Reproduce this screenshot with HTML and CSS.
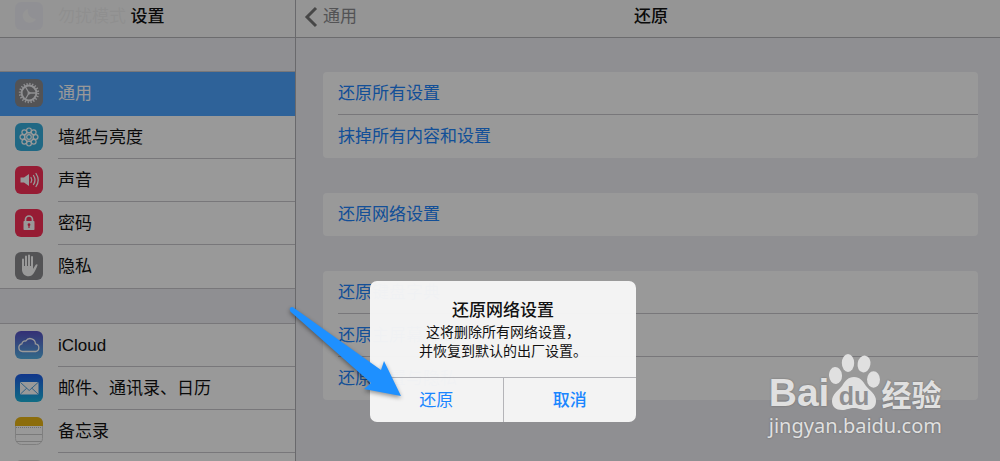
FILE: index.html
```html
<!DOCTYPE html>
<html lang="zh-CN">
<head>
  <meta charset="UTF-8">
  <meta name="viewport" content="width=device-width, initial-scale=1.0">
  <title>设置 - 还原</title>
  <link rel="stylesheet" href="styles.css">
</head>
<body>
  <div class="screen">
    <!-- 左侧菜单 -->
    <aside class="sidebar">
      <header class="bar"><h1 class="bar-title">设置</h1></header>
      <nav class="menu">
        <a class="row row-first" href="#">
          <svg class="icon" viewBox="0 0 28 28"><rect width="28" height="28" rx="6" fill="#5856d6"/><path d="M13 7a7 7 0 1 0 8 10A8 8 0 0 1 13 7z" fill="#fff"/></svg>
          <span class="label">勿扰模式</span>
        </a>
        <div class="group">
          <a class="row active" href="#">
            <svg class="icon" viewBox="0 0 28 28"><rect width="28" height="28" rx="6" fill="#8a8a8e"/><g fill="none" stroke="#efeff2"><circle cx="14" cy="14" r="9.2" stroke-width="2" stroke-dasharray="1.3 1.59"/><circle cx="14" cy="14" r="7.4" stroke-width="2"/><path d="M14 14h7M14 14l-3.5-6M14 14l-3.5 6" stroke-width="1.3"/></g><circle cx="14" cy="14" r="1.5" fill="#efeff2"/></svg>
            <span class="label">通用</span>
          </a>
          <a class="row" href="#">
            <svg class="icon" viewBox="0 0 28 28"><rect width="28" height="28" rx="6" fill="#36aedd"/><g fill="none" stroke="#fff" stroke-width="1.2"><circle cx="14" cy="14" r="2.3"/><circle cx="14" cy="7.4" r="2.4"/><circle cx="18.700" cy="9.300" r="2.400"/><circle cx="20.600" cy="14" r="2.400"/><circle cx="18.700" cy="18.700" r="2.400"/><circle cx="14" cy="20.600" r="2.400"/><circle cx="9.300" cy="18.700" r="2.400"/><circle cx="7.400" cy="14" r="2.400"/><circle cx="9.300" cy="9.300" r="2.400"/><circle cx="14" cy="14" r="4.300"/></g></svg>
            <span class="label">墙纸与亮度</span>
          </a>
          <a class="row" href="#">
            <svg class="icon" viewBox="0 0 28 28"><rect width="28" height="28" rx="6" fill="#fa2f57"/><path d="M5.500 11.500h3.500l5-3.500v12l-5-3.500h-3.500z" fill="#fff"/><g fill="none" stroke="#fff" stroke-width="1.3" stroke-linecap="round"><path d="M16 11.500q1.600 2.500 0 5"/><path d="M18.500 9.500q3 4.500 0 9"/><path d="M21 7.500q4.400 6.500 0 13"/></g></svg>
            <span class="label">声音</span>
          </a>
          <a class="row" href="#">
            <svg class="icon" viewBox="0 0 28 28"><rect width="28" height="28" rx="6" fill="#fa2f57"/><path d="M10.500 13v-2.500a3.500 3.500 0 0 1 7 0v2.500" fill="none" stroke="#fff" stroke-width="1.700"/><rect x="8.500" y="12" width="11" height="9" rx=".7" fill="#fff"/><path d="M12.600 15.700a1.400 1.400 0 1 1 2 1.200v2.100h-1.200v-2.100a1.400 1.400 0 0 1-.8-1.200z" fill="#fa2f57"/></svg>
            <span class="label">密码</span>
          </a>
          <a class="row" href="#">
            <svg class="icon" viewBox="0 0 28 28"><rect width="28" height="28" rx="6" fill="#8a8a8e"/><g stroke="#fff" stroke-width="2" stroke-linecap="round"><path d="M8 7.500v10M11 4.500v12M14 3.500v12M17 5v12"/></g><path d="M7 14h11v3l2.700-4.300q1-1 2 0c-.8 2.300-2.400 6-4 8.600-1.300 2-2.900 2.900-5 2.900-3.700 0-6.700-2.300-6.700-7z" fill="#fff"/></svg>
            <span class="label">隐私</span>
          </a>
        </div>
        <div class="group">
          <a class="row" href="#">
            <svg class="icon" viewBox="0 0 28 28"><defs><linearGradient id="cloud-bg" x2="0" y2="1"><stop stop-color="#5850c4"/><stop offset="1" stop-color="#55b0e4"/></linearGradient></defs><rect width="28" height="28" rx="6" fill="url(#cloud-bg)"/><path d="M7.500 20.500a3.900 3.900 0 0 1-.6-7.700A3.200 3.200 0 0 1 10.800 10a5.200 5.200 0 0 1 9.600 2.800 3.900 3.900 0 0 1 .3 7.700z" fill="none" stroke="#fff" stroke-width="1.300"/></svg>
            <span class="label">iCloud</span>
          </a>
          <a class="row" href="#">
            <svg class="icon" viewBox="0 0 28 28"><defs><linearGradient id="mail-bg" x2="0" y2="1"><stop stop-color="#1d5ae8"/><stop offset="1" stop-color="#1cb5dd"/></linearGradient></defs><rect width="28" height="28" rx="6" fill="url(#mail-bg)"/><rect x="5" y="8" width="18.500" height="12.500" rx="1" fill="#fff"/><path d="M5.500 8.500l8.700 8 8.800-8M5.500 20l6.200-5.800M23 20l-6.200-5.800" fill="none" stroke="#3f99d8" stroke-width=".9"/></svg>
            <span class="label">邮件、通讯录、日历</span>
          </a>
          <a class="row" href="#">
            <svg class="icon" viewBox="0 0 28 28"><rect x=".5" y=".5" width="27" height="27" rx="6" fill="#fff" stroke="#d4d4d4"/><path d="M0 9V6a6 6 0 0 1 6-6h16a6 6 0 0 1 6 6v3z" fill="#e9b615"/><path d="M1 10.500h26" stroke="#bbb" stroke-dasharray="1 1"/><path d="M1 17.500h26M1 24.500h26" stroke="#ccc"/></svg>
            <span class="label">备忘录</span>
          </a>
          <a class="row" href="#">
            <svg class="icon" viewBox="0 0 28 28"><rect width="28" height="28" rx="6" fill="#d8d8d8"/></svg>
          </a>
        </div>
      </nav>
    </aside>

    <!-- 右侧内容 -->
    <main class="detail">
      <header class="bar">
        <a class="back" href="#"><svg class="chevron" viewBox="0 0 14 22"><path d="M12 2L3 11l9 9" fill="none" stroke="#777" stroke-width="3"/></svg>通用</a>
        <h2 class="bar-title">还原</h2>
      </header>
      <div class="cards">
        <div class="card">
          <a class="option" href="#">还原所有设置</a>
          <a class="option" href="#">抹掉所有内容和设置</a>
        </div>
        <div class="card">
          <a class="option" href="#">还原网络设置</a>
        </div>
        <div class="card">
          <a class="option" href="#">还原键盘字典</a>
          <a class="option" href="#">还原主屏幕布局</a>
          <a class="option" href="#">还原位置与隐私</a>
        </div>
      </div>
    </main>

    <!-- 遮罩和弹窗 -->
    <div class="mask"></div>
    <div class="alert" role="alertdialog" aria-labelledby="alert-title" aria-describedby="alert-text">
      <div class="alert-body">
        <h3 class="alert-title" id="alert-title">还原网络设置</h3>
        <p class="alert-text" id="alert-text">这将删除所有网络设置，<br>并恢复到默认的出厂设置。</p>
      </div>
      <div class="alert-actions">
        <button class="alert-button" type="button">还原</button>
        <button class="alert-button cancel" type="button">取消</button>
      </div>
    </div>

    <!-- 箭头 -->
    <svg class="arrow" viewBox="0 0 120 100"><path d="M4 8Q3 11 6 13L85 83 78 89 115 96 98 61 95 70 8 8Q6 6 4 8z" fill="#1e90ff"/></svg>

    <!-- 水印 -->
    <div class="watermark">
      <div class="logo">
        <span class="logo-bai">Bai</span>
        <svg class="paw" viewBox="0 0 52 58">
          <g fill="#e0e0e0">
            <ellipse cx="6.500" cy="21.500" rx="6.500" ry="8.500" transform="rotate(-5 6.500 21.500)"/>
            <ellipse cx="19" cy="9" rx="6.200" ry="9"/>
            <ellipse cx="35" cy="10" rx="6.400" ry="8.500" transform="rotate(10 35 10)"/>
            <ellipse cx="44.500" cy="25.500" rx="6.500" ry="8.300"/>
            <path d="M25 23c6 0 9 4 12 9 4 5 10 8 10 15 0 6-4 9-10 9-5 0-7-2-12-2s-7 2-12 2C7 56 3 53 3 47c0-7 6-10 10-15 3-5 6-9 12-9z"/>
          </g>
          <text class="paw-text" x="25" y="51" text-anchor="middle">du</text>
        </svg>
        <span class="logo-cn">经验</span>
      </div>
      <div class="site">jingyan.baidu.com</div>
    </div>
  </div>
</body>
</html>
```
FILE: styles.css
```css
* {
  box-sizing: border-box;
}
body {
  margin: 0;
  font-family: "Liberation Sans", "Noto Sans CJK SC", sans-serif;
  font-size: 17px;
  color: #111;
}
a {
  color: inherit;
  text-decoration: none;
}
h1, h2, h3, p {
  margin: 0;
}
.screen {
  position: relative;
  display: flex;
  height: 100vh;
  overflow: hidden;
  background: #efeff4;
}

/* 顶部栏 */
.bar {
  display: flex;
  align-items: center;
  justify-content: center;
  height: 38px;
  padding-bottom: 3px;
  border-bottom: 1px solid #b5b5b8;
  background: rgba(248, 248, 248, 0.96);
}
.bar-title {
  font-size: 17px;
  font-weight: 500;
  line-height: 24px;
}

/* 左侧菜单 */
.sidebar {
  position: relative;
  flex: 0 0 296px;
  border-right: 1px solid #b0b0b4;
}
.sidebar .bar {
  position: absolute;
  top: 0;
  left: 0;
  right: 0;
}
.menu {
  margin-top: -5px;
}
.group {
  margin-bottom: 34px;
  border-top: 1px solid #c8c7cc;
  border-bottom: 1px solid #c8c7cc;
  background: #fff;
}
.row {
  display: flex;
  height: 43px;
  padding-left: 15px;
  align-items: flex-start;
  gap: 15px;
}
.row-first {
  margin-bottom: 33px;
  background: #fff;
}
.icon {
  flex: none;
  width: 28px;
  height: 28px;
  margin-top: 7px;
}
.label {
  flex: 1;
  align-self: stretch;
  line-height: 44px;
  border-bottom: 1px solid #c8c7cc;
}
.row:last-child .label,
.row-first .label,
.active .label {
  border-bottom: none;
}
.active {
  height: 44px;
  color: #fff;
  background: #4da3ff;
}

/* 右侧内容 */
.detail {
  flex: 1;
}
.detail .bar {
  position: relative;
  padding-left: 6px;
}
.back {
  position: absolute;
  left: 8px;
  top: 5px;
  display: flex;
  align-items: center;
  gap: 5px;
  line-height: 24px;
  color: #8a8a8e;
}
.chevron {
  width: 14px;
  height: 22px;
}
.cards {
  display: flex;
  flex-direction: column;
  gap: 35px;
  padding: 34px 22px 0 27px;
}
.card {
  padding-left: 15px;
  border-radius: 4px;
  background: #fff;
}
.option {
  display: block;
  height: 43px;
  line-height: 44px;
  color: #2084fc;
  border-bottom: 1px solid #c8c7cc;
}
.option:last-child {
  border-bottom: none;
}

/* 遮罩 */
.mask {
  position: absolute;
  inset: 0;
  background: rgba(0, 0, 0, 0.4);
}

/* 弹窗 */
.alert {
  position: absolute;
  left: 370px;
  top: 281px;
  width: 266px;
  border-radius: 7px;
  overflow: hidden;
  text-align: center;
  background: rgba(245, 245, 245, 0.98);
}
.alert-body {
  height: 96px;
  padding-top: 18px;
}
.alert-title {
  font-size: 17px;
  font-weight: 500;
  line-height: 24px;
}
.alert-text {
  font-size: 14px;
  line-height: 19px;
}
.alert-actions {
  display: flex;
  border-top: 1px solid #b4b4b8;
}
.alert-button {
  flex: 1;
  height: 44px;
  padding: 0 0 4px;
  border: none;
  background: none;
  font: inherit;
  color: #1a86ff;
}
.alert-button.cancel {
  font-weight: 500;
  border-left: 1px solid #b4b4b8;
}

/* 箭头 */
.arrow {
  position: absolute;
  left: 286px;
  top: 300px;
  width: 120px;
  height: 100px;
  filter: drop-shadow(0 2px 2px rgba(0, 0, 0, 0.4));
}

/* 水印 */
.watermark {
  position: absolute;
  right: 58px;
  top: 354px;
  color: #e0e0e0;
  text-shadow: 0 0 2px rgba(0, 0, 0, 0.3);
}
.logo {
  display: flex;
  align-items: flex-end;
  height: 58px;
}
.logo-bai {
  font-size: 39px;
  font-weight: bold;
  line-height: 38px;
}
.paw {
  width: 52px;
  height: 58px;
}
.paw-text {
  font-family: "Liberation Sans", sans-serif;
  font-size: 25px;
  font-weight: bold;
  fill: #8f8f92;
  text-shadow: none;
}
.logo-cn {
  font-size: 30px;
  font-weight: bold;
  line-height: 32px;
}
.site {
  font-family: "Noto Sans", sans-serif;
  font-size: 20px;
  line-height: 27px;
}
```
